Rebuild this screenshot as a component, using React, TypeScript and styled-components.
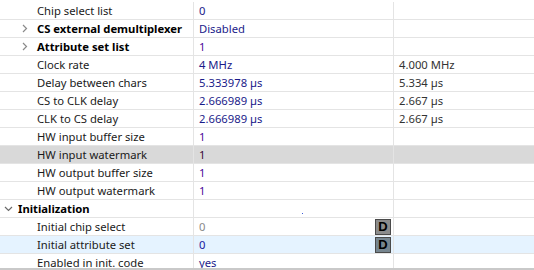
import React from "react";
import styled, { createGlobalStyle } from "styled-components";

const Global = createGlobalStyle`
  html, body { margin: 0; padding: 0; background: #fff; }
  body { font-family: "Noto Sans", "Open Sans", sans-serif; }
`;

const Frame = styled.div`
  width: 534px;
  height: 270px;
  overflow: hidden;
  display: flex;
  flex-direction: column;
  background: #fff;
`;

const Table = styled.div`
  height: 266px;
  padding-top: 2px;
  overflow: hidden;
  display: flex;
  flex-direction: column;
`;

const BottomEdge = styled.div`
  height: 2px;
  background: #c9c9c9;
`;

type RowKind = "normal" | "gray" | "selected";

const Row = styled.div<{ $kind: RowKind }>`
  display: grid;
  grid-template-columns: 194px 200px 1fr;
  height: 18px;
  flex: none;
  box-sizing: border-box;
  border-bottom: 1px solid #e4e4e4;
  background: ${(p) =>
    p.$kind === "gray" ? "#d9d9d9" : p.$kind === "selected" ? "#e5f3ff" : "#fff"};
`;

const Cell = styled.div`
  display: flex;
  align-items: center;
  box-sizing: border-box;
  border-right: 1px solid #e4e4e4;
  font-size: 11.25px;
  line-height: 17px;
  white-space: nowrap;
  overflow: hidden;
  position: relative;
`;

const NameCell = styled(Cell)<{ $level: number }>`
  padding-left: ${(p) => (p.$level === 0 ? 4 : 22)}px;
  color: #1a1a1a;
`;

const Chevron = styled.span<{ $w: number }>`
  width: ${(p) => p.$w}px;
  flex: none;
  display: flex;
  align-items: center;
  justify-content: flex-start;
`;

const Label = styled.span<{ $bold?: boolean }>`
  font-weight: ${(p) => (p.$bold ? 700 : 400)};
  color: ${(p) => (p.$bold ? "#000" : "#1a1a1a")};
`;

const ValueCell = styled(Cell)<{ $color: string }>`
  padding-left: 5px;
  padding-right: 2px;
  color: ${(p) => p.$color};
  justify-content: space-between;
`;

const InfoCell = styled(Cell)`
  padding-left: 5px;
  color: #333;
  border-right: none;
`;

const DButton = styled.span<{ $sel?: boolean }>`
  width: 16px;
  height: 16px;
  box-sizing: border-box;
  border: 1px solid #4a4a4a;
  background: ${(p) => (p.$sel ? "#76858f" : "#8c8c8c")};
  color: #000;
  font-family: "Liberation Sans", Arial, sans-serif;
  font-weight: 700;
  font-size: 13px;
  display: flex;
  align-items: center;
  justify-content: center;
  line-height: 1;
`;

const Dot = styled.span`
  position: absolute;
  left: 108px;
  top: 13px;
  width: 1px;
  height: 1px;
  background: #3b5bd9;
`;

const RightChevron = () => (
  <svg width="6" height="9" viewBox="0 0 6 9">
    <path d="M1 1 L4.5 4.5 L1 8" fill="none" stroke="#8a8a8a" strokeWidth="1.2" />
  </svg>
);

const DownChevron = () => (
  <svg width="9" height="6" viewBox="0 0 9 6">
    <path d="M1 1 L4.5 4.5 L8 1" fill="none" stroke="#6a6a6a" strokeWidth="1.2" />
  </svg>
);

type Item = {
  name: string;
  level: number;
  bold?: boolean;
  chevron?: "right" | "down";
  value?: string;
  color?: string;
  info?: string;
  kind?: RowKind;
  dbtn?: boolean;
  dot?: boolean;
};

const NAVY = "#1b1b8a";
const PURPLE = "#4b0a9c";

const items: Item[] = [
  { name: "Chip select list", level: 1, value: "0", color: NAVY },
  { name: "CS external demultiplexer", level: 1, bold: true, chevron: "right", value: "Disabled", color: NAVY },
  { name: "Attribute set list", level: 1, bold: true, chevron: "right", value: "1", color: PURPLE },
  { name: "Clock rate", level: 1, value: "4 MHz", color: NAVY, info: "4.000 MHz" },
  { name: "Delay between chars", level: 1, value: "5.333978 µs", color: NAVY, info: "5.334 µs" },
  { name: "CS to CLK delay", level: 1, value: "2.666989 µs", color: NAVY, info: "2.667 µs" },
  { name: "CLK to CS delay", level: 1, value: "2.666989 µs", color: NAVY, info: "2.667 µs" },
  { name: "HW input buffer size", level: 1, value: "1", color: PURPLE },
  { name: "HW input watermark", level: 1, value: "1", color: "#3a0a3a", kind: "gray" },
  { name: "HW output buffer size", level: 1, value: "1", color: PURPLE },
  { name: "HW output watermark", level: 1, value: "1", color: PURPLE },
  { name: "Initialization", level: 0, bold: true, chevron: "down", dot: true },
  { name: "Initial chip select", level: 1, value: "0", color: "#8a8a8a", dbtn: true },
  { name: "Initial attribute set", level: 1, value: "0", color: "#1a1aa0", dbtn: true, kind: "selected" },
  { name: "Enabled in init. code", level: 1, value: "yes", color: NAVY },
];

export default function App() {
  return (
    <Frame>
      <Global />
      <Table>
        {items.map((it, i) => (
          <Row key={i} $kind={it.kind ?? "normal"}>
            <NameCell $level={it.level}>
              <Chevron $w={it.level === 0 ? 14 : 15}>
                {it.chevron === "down" && <DownChevron />}
                {it.chevron === "right" && <RightChevron />}
              </Chevron>
              <Label $bold={it.bold}>{it.name}</Label>
            </NameCell>
            <ValueCell $color={it.color ?? NAVY}>
              <span>{it.value ?? ""}</span>
              {it.dbtn && <DButton $sel={it.kind === "selected"}>D</DButton>}
              {it.dot && <Dot />}
            </ValueCell>
            <InfoCell>{it.info ?? ""}</InfoCell>
          </Row>
        ))}
      </Table>
      <BottomEdge />
    </Frame>
  );
}
